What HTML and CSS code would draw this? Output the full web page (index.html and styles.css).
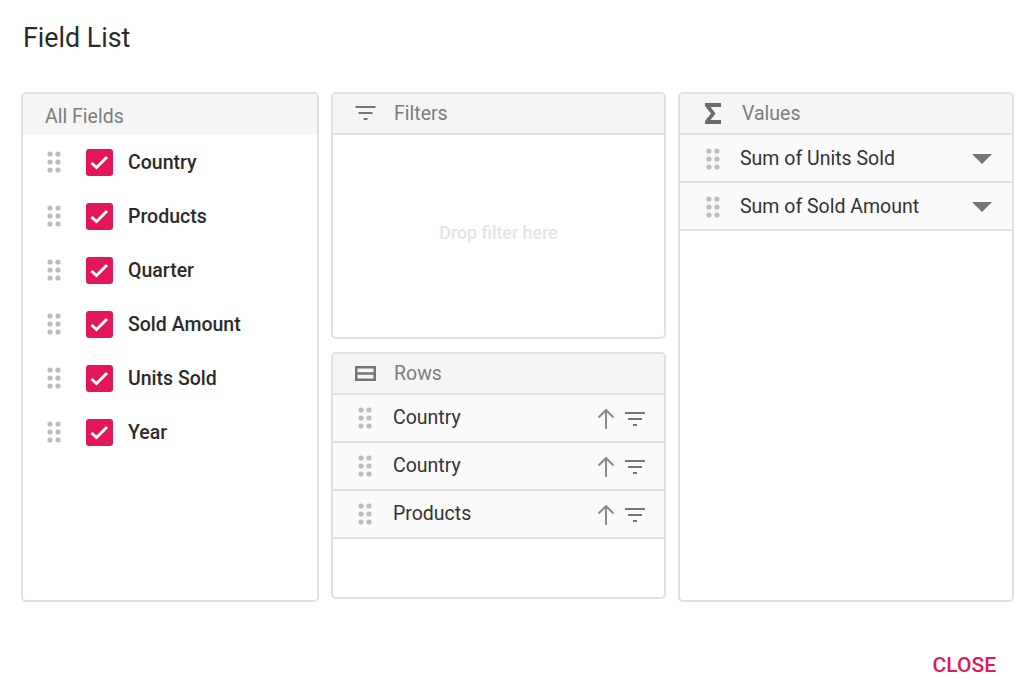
FILE: index.html
```html
<!DOCTYPE html>
<html lang="en">
<head>
  <meta charset="UTF-8">
  <title>Field List</title>
  <link rel="stylesheet" href="styles.css">
</head>
<body>
  <svg class="defs" width="0" height="0">
    <symbol id="dots" viewBox="0 0 16 24">
      <circle cx="4" cy="4" r="2.600"/><circle cx="12" cy="4" r="2.600"/>
      <circle cx="4" cy="12" r="2.600"/><circle cx="12" cy="12" r="2.600"/>
      <circle cx="4" cy="20" r="2.600"/><circle cx="12" cy="20" r="2.600"/>
    </symbol>
    <symbol id="check" viewBox="0 0 27 27">
      <rect width="27" height="27" rx="3" fill="#e3165b"/>
      <path d="M5.500 14l5 4.500L21 8" fill="none" stroke="#fff" stroke-width="3"/>
    </symbol>
    <symbol id="filter" viewBox="0 0 20 14">
      <path d="M0 0h20v2H0zM3 6h14v2H3zM8 12h4v2H8z"/>
    </symbol>
    <symbol id="arrow" viewBox="0 0 18 20">
      <path d="M9 20V1M1.500 8.500L9 1l7.500 7.500" fill="none" stroke="currentColor" stroke-width="2"/>
    </symbol>
  </svg>

  <div class="dialog">
    <h1 class="title">Field List</h1>

    <div class="columns">
      <section class="panel fields">
        <div class="panel-head plain"><span>All Fields</span></div>
        <div class="field"><svg class="dots"><use href="#dots"/></svg><svg class="check"><use href="#check"/></svg><span>Country</span></div>
        <div class="field"><svg class="dots"><use href="#dots"/></svg><svg class="check"><use href="#check"/></svg><span>Products</span></div>
        <div class="field"><svg class="dots"><use href="#dots"/></svg><svg class="check"><use href="#check"/></svg><span>Quarter</span></div>
        <div class="field"><svg class="dots"><use href="#dots"/></svg><svg class="check"><use href="#check"/></svg><span>Sold Amount</span></div>
        <div class="field"><svg class="dots"><use href="#dots"/></svg><svg class="check"><use href="#check"/></svg><span>Units Sold</span></div>
        <div class="field"><svg class="dots"><use href="#dots"/></svg><svg class="check"><use href="#check"/></svg><span>Year</span></div>
      </section>

      <div class="middle">
        <section class="panel filters">
          <div class="panel-head">
            <svg class="head-icon icon-filter"><use href="#filter"/></svg>
            <span>Filters</span>
          </div>
          <div class="drop-hint">Drop filter here</div>
        </section>

        <section class="panel rows">
          <div class="panel-head">
            <svg class="head-icon" viewBox="0 0 21 15">
              <path d="M1.250 1.250h18.500v12.500H1.250zM1.250 7.500h18.500" fill="none" stroke="#757575" stroke-width="2.500"/>
            </svg>
            <span>Rows</span>
          </div>
          <div class="pill">
            <svg class="dots"><use href="#dots"/></svg>
            <span class="pill-label">Country</span>
            <svg class="arrow"><use href="#arrow"/></svg>
            <svg class="icon-filter"><use href="#filter"/></svg>
          </div>
          <div class="pill">
            <svg class="dots"><use href="#dots"/></svg>
            <span class="pill-label">Country</span>
            <svg class="arrow"><use href="#arrow"/></svg>
            <svg class="icon-filter"><use href="#filter"/></svg>
          </div>
          <div class="pill">
            <svg class="dots"><use href="#dots"/></svg>
            <span class="pill-label">Products</span>
            <svg class="arrow"><use href="#arrow"/></svg>
            <svg class="icon-filter"><use href="#filter"/></svg>
          </div>
        </section>
      </div>

      <section class="panel values">
        <div class="panel-head">
          <svg class="head-icon sigma" viewBox="0 0 16 21">
            <path d="M0 0h16v4H5.500l5 6.500-5 6.500H16v4H0v-3l6-7.500L0 3z" fill="#6b6b6b"/>
          </svg>
          <span>Values</span>
        </div>
        <div class="pill">
          <svg class="dots"><use href="#dots"/></svg>
          <span class="pill-label">Sum of Units Sold</span>
          <span class="caret"></span>
        </div>
        <div class="pill">
          <svg class="dots"><use href="#dots"/></svg>
          <span class="pill-label">Sum of Sold Amount</span>
          <span class="caret"></span>
        </div>
      </section>
    </div>

    <div class="footer">
      <button class="close-btn" type="button">CLOSE</button>
    </div>
  </div>
</body>
</html>
```

FILE: styles.css
```css
html, body {
  margin: 0;
  height: 100%;
}
body {
  font-family: Roboto, "Liberation Sans", sans-serif;
  background-color: #fff;
  overflow: hidden;
}
.defs {
  display: block;
  height: 0;
}
.dialog {
  padding: 21px 21px 0;
}
.title {
  margin: 0 0 0 2px;
  height: 71px;
  font-size: 26.800px;
  line-height: 35px;
  font-weight: 400;
  color: #2b2b2b;
}
.columns {
  display: grid;
  grid-template-columns: 298px 335px 336px;
  gap: 12px;
  height: 510px;
}
.panel {
  border: 2px solid #e0e0e0;
  border-radius: 5px;
  box-sizing: border-box;
  overflow: hidden;
}
.panel-head {
  display: flex;
  align-items: center;
  height: 41px;
  box-sizing: border-box;
  padding-bottom: 1px;
  border-bottom: 2px solid #e0e0e0;
  background-color: #f5f5f5;
  font-size: 19.500px;
  color: #7d7d7d;
}
.panel-head.plain {
  border-bottom: none;
  padding: 3px 0 0 22px;
}
.head-icon {
  flex: none;
  width: 21px;
  height: 15px;
  margin: 0 18px 0 22px;
}
.middle {
  display: flex;
  flex-direction: column;
  gap: 13px;
  height: 507px;
}
.filters {
  height: 247px;
}
.rows {
  height: 247px;
}
.drop-hint {
  height: 194px;
  display: flex;
  align-items: center;
  justify-content: center;
  font-size: 17.800px;
  font-weight: 500;
  color: #e4e4e4;
}
.field {
  display: flex;
  align-items: center;
  height: 54px;
  font-size: 19.500px;
  font-weight: 500;
  color: #2b2b2b;
}
.dots {
  flex: none;
  width: 16px;
  height: 24px;
  fill: #bdbdbd;
}
.field .dots {
  margin: 0 24px 0 23px;
}
.check {
  flex: none;
  width: 27px;
  height: 27px;
  margin-right: 15px;
}
.pill {
  display: flex;
  align-items: center;
  height: 48px;
  box-sizing: border-box;
  border-bottom: 2px solid #e0e0e0;
  background-color: #fafafa;
  font-size: 19.500px;
  color: #333;
}
.pill .dots {
  margin: 0 20px 0 24px;
}
.pill-label {
  flex: 1;
}
.rows .pill-label {
  margin-bottom: 2px;
}
.values .pill .dots {
  margin: 2px 19px 0 25px;
}
.icon-filter {
  flex: none;
  width: 20px;
  height: 14px;
  fill: #757575;
}
.panel-head .icon-filter {
  width: 21px;
}
.pill .icon-filter {
  margin: 2px 19px 0 0;
}
.arrow {
  flex: none;
  width: 18px;
  height: 20px;
  margin: 1px 10px 0 0;
  color: #8a8a8a;
}
.caret {
  flex: none;
  width: 0;
  height: 0;
  margin: 2px 20px 0 0;
  border-left: 10px solid transparent;
  border-right: 10px solid transparent;
  border-top: 10px solid #757575;
}
.sigma {
  width: 16px;
  height: 21px;
  margin: 0 21px 0 25px;
}
.footer {
  display: flex;
  justify-content: flex-end;
  padding: 49px 18px 0 0;
}
.close-btn {
  border: none;
  background: none;
  padding: 0;
  font-family: inherit;
  font-size: 21px;
  line-height: 28px;
  font-weight: 500;
  color: #e3165b;
  cursor: pointer;
}
```
